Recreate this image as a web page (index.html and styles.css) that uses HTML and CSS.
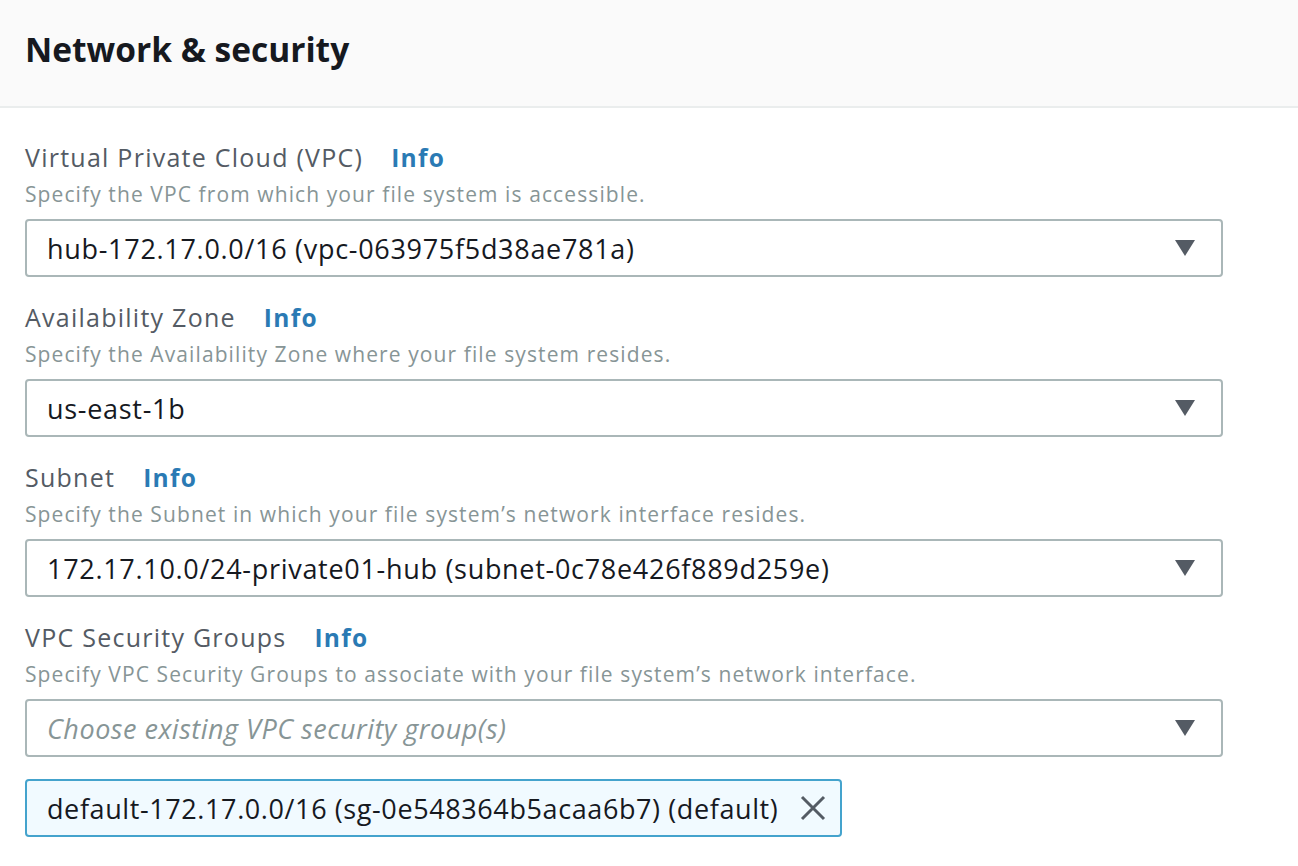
FILE: index.html
```html
<!DOCTYPE html>
<html>
<head>
<meta charset="utf-8">
<link rel="stylesheet" href="styles.css">
</head>
<body>
<div class="panel">
  <div class="panel-header">
    <h2 class="title">Network &amp; security</h2>
  </div>
  <div class="panel-body">
    <div class="field">
      <div class="label-row"><span class="label">Virtual Private Cloud (VPC)</span><a class="info">Info</a></div>
      <div class="desc">Specify the VPC from which your file system is accessible.</div>
      <div class="select"><span class="value">hub-172.17.0.0/16 (vpc-063975f5d38ae781a)</span><span class="caret"></span></div>
    </div>
    <div class="field">
      <div class="label-row"><span class="label">Availability Zone</span><a class="info">Info</a></div>
      <div class="desc">Specify the Availability Zone where your file system resides.</div>
      <div class="select"><span class="value">us-east-1b</span><span class="caret"></span></div>
    </div>
    <div class="field">
      <div class="label-row"><span class="label">Subnet</span><a class="info">Info</a></div>
      <div class="desc">Specify the Subnet in which your file system’s network interface resides.</div>
      <div class="select"><span class="value">172.17.10.0/24-private01-hub (subnet-0c78e426f889d259e)</span><span class="caret"></span></div>
    </div>
    <div class="field">
      <div class="label-row"><span class="label">VPC Security Groups</span><a class="info">Info</a></div>
      <div class="desc">Specify VPC Security Groups to associate with your file system’s network interface.</div>
      <div class="select"><span class="value placeholder">Choose existing VPC security group(s)</span><span class="caret"></span></div>
      <div class="tokens">
        <div class="token"><span class="token-text">default-172.17.0.0/16 (sg-0e548364b5acaa6b7) (default)</span>
          <svg class="dismiss" width="26" height="26" viewBox="0 0 26 26"><path d="M2 2 L24 24 M24 2 L2 24" stroke="#545b64" stroke-width="3" fill="none"/></svg>
        </div>
      </div>
    </div>
  </div>
</div>
</body>
</html>
```
FILE: styles.css
```css
html, body {
  margin: 0;
  padding: 0;
  background: #ffffff;
}
body {
  font-family: "Open Sans", "Liberation Sans", sans-serif;
  color: #16191f;
}
.panel-header {
  background: #fafafa;
  border-bottom: 2px solid #eaeded;
  height: 106px;
  padding-left: 25px;
  display: flex;
  align-items: center;
}
.title {
  margin: 0;
  margin-top: -8px;
  font-size: 33.5px;
  font-weight: 700;
  color: #16191f;
}
.panel-body {
  padding: 32px 75px 0 25px;
}
.field {
  display: flex;
  flex-direction: column;
  margin-bottom: 23px;
}
.label-row {
  height: 36px;
  display: flex;
  align-items: center;
  gap: 28px;
  margin-top: -1px;
  margin-bottom: 1px;
}
.label {
  font-size: 25px;
  letter-spacing: 1.25px;
  color: #545b64;
}
.info {
  font-size: 24.5px;
  letter-spacing: 1.3px;
  font-weight: 700;
  color: #2a7ab4;
}
.desc {
  height: 36px;
  display: flex;
  align-items: center;
  font-size: 21px;
  letter-spacing: 1.1px;
  color: #879596;
}
.select {
  margin-top: 7px;
  height: 58px;
  box-sizing: border-box;
  border: 2px solid #aab7b8;
  border-radius: 4px;
  display: flex;
  align-items: center;
  justify-content: space-between;
  padding: 0 26px 0 20px;
}
.value {
  font-size: 27px;
  letter-spacing: 0.7px;
  color: #16191f;
}
.placeholder {
  font-style: italic;
  letter-spacing: 0.5px;
  color: #879596;
}
.caret {
  width: 0;
  height: 0;
  border-left: 10.5px solid transparent;
  border-right: 10.5px solid transparent;
  border-top: 16px solid #545b64;
}
.tokens {
  margin-top: 22px;
  display: flex;
}
.token {
  height: 58px;
  box-sizing: border-box;
  border: 2px solid #44a3cd;
  border-radius: 4px;
  background: #f1faff;
  display: flex;
  align-items: center;
  padding: 0 14px 0 20px;
  gap: 22px;
}
.token-text {
  font-size: 27px;
  letter-spacing: 0.6px;
  color: #16191f;
}
.dismiss {
  display: block;
}
```
